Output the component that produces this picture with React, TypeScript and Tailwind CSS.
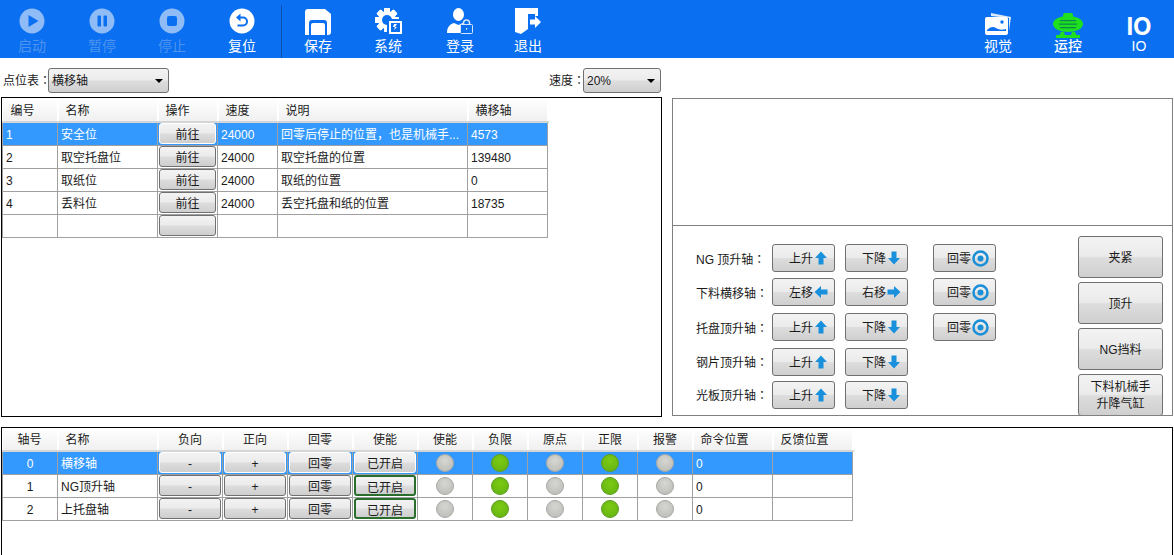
import type { ReactNode } from 'react'

const glossy =
  'bg-[linear-gradient(#f3f3f3,#ebebeb_48%,#dddddd_52%,#cfcfcf)] border border-[#707070] rounded-[3px] text-[#1a1a1a]'

const blue = '#0a6ff0'

function Circle({ children, dim }: { children: ReactNode; dim?: boolean }) {
  return (
    <svg width="26" height="26" viewBox="0 0 26 26">
      <circle cx="13" cy="13" r="12.5" fill={dim ? '#8fbcf6' : '#ffffff'} />
      {children}
    </svg>
  )
}

function SaveIcon() {
  return (
    <svg width="26" height="26" viewBox="0 0 26 26" className="-mb-[1px]">
      <path d="M3 0h17l6 5v18a3 3 0 0 1-3 3H0V3a3 3 0 0 1 3-3z" fill="#fff" />
      <path d="M4 26V14a3 3 0 0 1 3-3h12a3 3 0 0 1 3 3v12h-2V16a2 2 0 0 0-2-2H8a2 2 0 0 0-2 2v10z" fill={blue} />
    </svg>
  )
}

function GearIcon() {
  const teeth = [0, 45, 90, 135, 180, 225, 270, 315]
  return (
    <svg width="27" height="26" viewBox="0 0 27 26">
      {teeth.map(a => (
        <rect key={a} x="9" y="0" width="6" height="24" rx="1" fill="#fff" transform={`rotate(${a} 12 12)`} />
      ))}
      <circle cx="12" cy="12" r="9" fill="#fff" />
      <circle cx="12" cy="12" r="5" fill={blue} />
      <rect x="12" y="11" width="15" height="15" fill={blue} />
      <rect x="14" y="13" width="13" height="13" fill="#fff" />
      <rect x="16" y="15" width="9" height="9" fill={blue} />
      <path d="M19 16h3l-2 3h2l-3 3 1-3h-2z" fill="#fff" />
    </svg>
  )
}

function UserLockIcon() {
  return (
    <svg width="26" height="26" viewBox="0 0 26 26">
      <ellipse cx="11.500" cy="6.500" rx="5.500" ry="6.500" fill="#fff" />
      <path d="M0 25c0-6 3-9 7-10l4.500 2 4-2 1 .5a4 4 0 0 0-3 3.500v6H0z" fill="#fff" />
      <path d="M16.500 17v-2a3 3 0 0 1 6 0v2" fill="none" stroke="#d6e5fa" strokeWidth="1.500" />
      <rect x="13.500" y="16.500" width="12" height="9" rx="1" fill={blue} stroke="#d6e5fa" />
      <rect x="19" y="20" width="1.200" height="1.600" fill="#fff" />
    </svg>
  )
}

function ExitIcon() {
  return (
    <svg width="27" height="26" viewBox="0 0 27 26">
      <path d="M0 0h23v8h-3V6H13v15l-7 5-6-2z" fill="#fff" />
      <path d="M15 11.500h5V8l6 6-6 6v-3.500h-5z" fill="#fff" />
    </svg>
  )
}

function ImagesIcon() {
  return (
    <svg width="27" height="22" viewBox="0 0 27 22" className="-mb-[1px]">
      <path d="M6 0l20 4-2 14V5L6 3z" fill="#dfeafb" />
      <rect x="0" y="4" width="23" height="18" rx="2" fill="#fff" />
      <circle cx="17" cy="9" r="1.700" fill={blue} />
      <path d="M2 17c3-3 6-4 9-2 3 2 6 2 10 1v2H2z" fill={blue} />
    </svg>
  )
}

function MachineIcon() {
  return (
    <svg width="30" height="25" viewBox="0 0 30 25" className="relative -mb-[4px]">
      <rect x="10" y="0" width="10" height="5" rx="2" fill="#1fe01f" />
      <ellipse cx="15" cy="11" rx="15" ry="8" fill="#1fe01f" />
      <rect x="7" y="7" width="16" height="1.300" fill="#0a8a4a" />
      <rect x="6" y="10.500" width="18" height="1.300" fill="#0a8a4a" />
      <rect x="7" y="14" width="16" height="1.300" fill="#0a8a4a" />
      <path d="M8 19h3l1 3h6l1-3h3l1.500 3H27v3H3v-3h3.500z" fill="#1fe01f" />
    </svg>
  )
}

function ToolItem({
  icon,
  label,
  dim,
  active,
  className = '',
}: {
  icon: ReactNode
  label: string
  dim?: boolean
  active?: boolean
  className?: string
}) {
  return (
    <div className={`flex w-[64px] flex-col items-center ${className}`}>
      <div className="flex h-[34px] items-end justify-center">{icon}</div>
      <span
        className={`relative mt-[3px] text-[14px] leading-[18px] ${dim ? 'text-[#4f94ee]' : 'text-white'} ${
          active ? 'font-medium' : ''
        }`}
      >
        {label}
      </span>
    </div>
  )
}

function Toolbar() {
  return (
    <div className="flex h-[58px] shrink-0 items-start bg-[#0a6ff0]">
      <ToolItem
        dim
        label="启动"
        icon={
          <Circle dim>
            <path d="M9.500 7l10 6-10 6z" fill={blue} />
          </Circle>
        }
      />
      <ToolItem
        dim
        className="ml-[6px]"
        label="暂停"
        icon={
          <Circle dim>
            <rect x="8.500" y="7.500" width="3.500" height="11" rx="1" fill={blue} />
            <rect x="14.500" y="7.500" width="3.500" height="11" rx="1" fill={blue} />
          </Circle>
        }
      />
      <ToolItem
        dim
        className="ml-[6px]"
        label="停止"
        icon={
          <Circle dim>
            <rect x="8" y="8" width="10" height="10" rx="2" fill={blue} />
          </Circle>
        }
      />
      <ToolItem
        className="ml-[6px]"
        label="复位"
        icon={
          <Circle>
            <path d="M9 9.500h5a4 4 0 0 1 0 8H8.500" fill="none" stroke={blue} strokeWidth="2" />
            <path d="M11.500 5.500v8L7 9.500z" fill={blue} />
          </Circle>
        }
      />
      <div className="ml-[7px] mt-[5px] h-[53px] w-px bg-[#0a4fa8]" />
      <ToolItem className="ml-[4px]" label="保存" icon={<SaveIcon />} />
      <ToolItem className="ml-[6px]" label="系统" icon={<GearIcon />} />
      <ToolItem className="ml-[8px]" label="登录" icon={<UserLockIcon />} />
      <ToolItem className="ml-[4px]" label="退出" icon={<ExitIcon />} />
      <div className="flex-1" />
      <ToolItem label="视觉" icon={<ImagesIcon />} />
      <ToolItem className="ml-[6px]" active label="运控" icon={<MachineIcon />} />
      <ToolItem
        className="ml-[7px] mr-[3px]"
        label="IO"
        icon={<span className="-mb-[1px] font-['Inter',sans-serif] text-[24px] font-bold leading-[17px] text-white">IO</span>}
      />
    </div>
  )
}

function Colon() {
  return <span className="font-['Noto_Sans_CJK_TC',sans-serif]">：</span>
}

function SelectBox({ value, className }: { value: string; className: string }) {
  return (
    <div className={`flex h-[25px] items-center justify-between pl-[3px] pr-[5px] ${glossy} ${className}`}>
      <span>{value}</span>
      <span className="h-0 w-0 border-x-[4px] border-t-[4px] border-x-transparent border-t-black" />
    </div>
  )
}

const pointCols = [55, 100, 60, 60, 190, 80]
const pointHead = ['编号', '名称', '操作', '速度', '说明', '横移轴']
const points = [
  ['1', '安全位', '24000', '回零后停止的位置，也是机械手...', '4573'],
  ['2', '取空托盘位', '24000', '取空托盘的位置', '139480'],
  ['3', '取纸位', '24000', '取纸的位置', '0'],
  ['4', '丢料位', '24000', '丢空托盘和纸的位置', '18735'],
  ['', '', '', '', ''],
]

const cellBorder = 'border border-[#a0a0a0]'
const headCell =
  'border-r-2 border-b-2 border-r-white border-b-[#d5d5d5] bg-[linear-gradient(#ffffff,#f0f0f0)] p-0 pt-[2px] font-normal'

function PointTable() {
  return (
    <table className="w-[546px] table-fixed border-collapse">
      <colgroup>
        {pointCols.map((w, i) => (
          <col key={i} style={{ width: w }} />
        ))}
      </colgroup>
      <thead>
        <tr>
          {pointHead.map((h, i) => (
            <th key={h} className={`${headCell} h-[24px] text-left ${i === 0 ? 'pl-[8px]' : 'pl-[7px]'}`}>
              {h}
            </th>
          ))}
        </tr>
      </thead>
      <tbody>
        {points.map((p, i) => {
          const sel = i === 0
          const td = `h-[23px] truncate px-[3px] py-0 ${cellBorder} ${sel ? 'bg-[#3399ff] text-white' : ''}`
          return (
            <tr key={i}>
              <td className={`${td} pt-[2px]`}>{p[0]}</td>
              <td className={`${td} pt-[2px]`}>{p[1]}</td>
              <td className={`${td} !px-[1px]`}>
                <button className={`block h-[21px] w-full pt-[2px] ${glossy} ${sel ? '!border-white' : ''}`}>
                  {p[2] ? '前往' : ''}
                </button>
              </td>
              <td className={`${td} pt-[2px]`}>{p[2]}</td>
              <td className={`${td} pt-[2px]`}>{p[3]}</td>
              <td className={`${td} pt-[2px]`}>{p[4]}</td>
            </tr>
          )
        })}
      </tbody>
    </table>
  )
}

function Arrow({ dir }: { dir: 'up' | 'down' | 'left' | 'right' }) {
  const rot = { up: 0, down: 180, left: -90, right: 90 }[dir]
  return (
    <svg width="14" height="14" viewBox="0 0 14 14" style={{ transform: `rotate(${rot}deg)` }}>
      <path d="M7 0.500l6 6.500H9.500v6.500h-5V7H1z" fill="#1890dc" />
    </svg>
  )
}

function Target() {
  return (
    <svg width="17" height="17" viewBox="0 0 17 17">
      <circle cx="8.500" cy="8.500" r="7" fill="none" stroke="#1a8fd8" strokeWidth="2.500" />
      <circle cx="8.500" cy="8.500" r="3" fill="#1a8fd8" />
    </svg>
  )
}

function AxisButton({ label, icon, className = '' }: { label: string; icon: ReactNode; className?: string }) {
  return (
    <button className={`flex h-[28px] w-[63px] items-center justify-end gap-[1px] pr-[6px] ${glossy} ${className}`}>
      <span className="pt-[2px]">{label}</span>
      {icon}
    </button>
  )
}

const axisRows = [
  { name: 'NG 顶升轴', a: ['上升', 'up'], b: ['下降', 'down'], home: true, mt: 'mt-[18px]', pt: 'pt-[2px]' },
  { name: '下料横移轴', a: ['左移', 'left'], b: ['右移', 'right'], home: true, mt: 'mt-[6px]', pt: 'pt-[2px]' },
  { name: '托盘顶升轴', a: ['上升', 'up'], b: ['下降', 'down'], home: true, mt: 'mt-[7px]', pt: 'pt-[2px]' },
  { name: '钢片顶升轴', a: ['上升', 'up'], b: ['下降', 'down'], home: false, mt: 'mt-[7px]', pt: 'pt-0' },
  { name: '光板顶升轴', a: ['上升', 'up'], b: ['下降', 'down'], home: false, mt: 'mt-[5px]', pt: 'pt-0' },
] as const

const sideButtons = [
  { label: '夹紧', cls: 'h-[42px] mt-[10px]' },
  { label: '顶升', cls: 'h-[42px] mt-[4px]' },
  { label: 'NG挡料', cls: 'h-[42px] mt-[4px]' },
]

function ControlPanel() {
  return (
    <div className="flex h-[318px] w-[501px] flex-col overflow-hidden border border-[#808080]">
      <div className="h-[127px] shrink-0 border-b border-[#808080]" />
      <div className="flex flex-1">
        <div className="w-[405px] shrink-0">
          {axisRows.map(r => (
            <div key={r.name} className={`flex items-center ${r.mt}`}>
              <span className={`ml-[23px] w-[76px] whitespace-nowrap ${r.pt}`}>
                {r.name}
                <Colon />
              </span>
              <AxisButton label={r.a[0]} icon={<Arrow dir={r.a[1]} />} />
              <AxisButton className="ml-[10px]" label={r.b[0]} icon={<Arrow dir={r.b[1]} />} />
              {r.home && <AxisButton className="ml-[25px]" label="回零" icon={<Target />} />}
            </div>
          ))}
        </div>
        <div className="flex w-[85px] flex-col">
          {sideButtons.map(b => (
            <button key={b.label} className={`w-full pt-[1px] ${glossy} ${b.cls}`}>
              {b.label}
            </button>
          ))}
          <button className={`mt-[4px] h-[42px] w-full pt-[1px] leading-[17px] ${glossy}`}>
            下料机械手
            <br />
            升降气缸
          </button>
        </div>
      </div>
    </div>
  )
}

const motionCols = [55, 100, 65, 65, 65, 65, 55, 55, 55, 55, 55, 80, 80]
const motionHead = ['轴号', '名称', '负向', '正向', '回零', '使能', '使能', '负限', '原点', '正限', '报警', '命令位置', '反馈位置']
const motions = [
  ['0', '横移轴'],
  ['1', 'NG顶升轴'],
  ['2', '上托盘轴'],
]
const leds = [false, true, false, true, false]

function Led({ on }: { on: boolean }) {
  return (
    <span
      className={`mx-auto block h-[18px] w-[18px] rounded-full border ${
        on
          ? 'border-[#5d9c22] bg-[radial-gradient(circle_at_50%_35%,#7bcb14,#62b010)]'
          : 'border-[#a8a8a4] bg-[radial-gradient(circle_at_50%_35%,#d6d6d2,#b8bab6)]'
      }`}
    />
  )
}

function MotionTable() {
  return (
    <table className="w-[850px] table-fixed border-collapse">
      <colgroup>
        {motionCols.map((w, i) => (
          <col key={i} style={{ width: w }} />
        ))}
      </colgroup>
      <thead>
        <tr>
          {motionHead.map((h, i) => (
            <th key={i} className={`${headCell} h-[23px] ${i === 1 || i >= 11 ? 'pl-[7px] text-left' : 'text-center'}`}>
              {h}
            </th>
          ))}
        </tr>
      </thead>
      <tbody>
        {motions.map((m, i) => {
          const sel = i === 0
          const td = `h-[23px] truncate py-0 ${cellBorder} ${sel ? 'bg-[#3399ff] text-white' : ''}`
          return (
            <tr key={i}>
              <td className={`${td} pt-[2px] text-center`}>{m[0]}</td>
              <td className={`${td} px-[3px] pt-[2px]`}>{m[1]}</td>
              {['-', '+', '回零', '已开启'].map((b, j) => (
                <td key={j} className={`${td} px-[1px]`}>
                  <button
                    className={`block h-[21px] w-full pt-[2px] ${glossy} ${
                      j === 3 && !sel ? '!border-2 !border-[#2a6e2e]' : ''
                    } ${sel ? '!border-white' : ''}`}
                  >
                    {b}
                  </button>
                </td>
              ))}
              {leds.map((on, j) => (
                <td key={j} className={td}>
                  <Led on={on} />
                </td>
              ))}
              <td className={`${td} px-[3px] pt-[2px]`}>0</td>
              <td className={td} />
            </tr>
          )
        })}
      </tbody>
    </table>
  )
}

export default function App() {
  return (
    <div className="flex h-[555px] w-[1174px] flex-col overflow-hidden bg-white font-['Liberation_Sans','Noto_Sans_CJK_SC',sans-serif] text-[12px] text-[#1a1a1a]">
      <Toolbar />
      <div className="flex h-[39px] shrink-0 items-center pt-[6px]">
        <span className="ml-[3px] w-[45px] whitespace-nowrap">
          点位表
          <Colon />
        </span>
        <SelectBox value="横移轴" className="w-[121px]" />
        <span className="ml-[380px] w-[34px] whitespace-nowrap">
          速度
          <Colon />
        </span>
        <SelectBox value="20%" className="w-[78px]" />
      </div>
      <div className="flex shrink-0 items-start">
        <div className="ml-[1px] h-[320px] w-[661px] shrink-0 border border-black">
          <PointTable />
        </div>
        <div className="ml-[10px] mt-[1px]">
          <ControlPanel />
        </div>
      </div>
      <div className="ml-[1px] mt-[10px] h-[140px] w-[1172px] shrink-0 border border-black">
        <MotionTable />
      </div>
    </div>
  )
}
